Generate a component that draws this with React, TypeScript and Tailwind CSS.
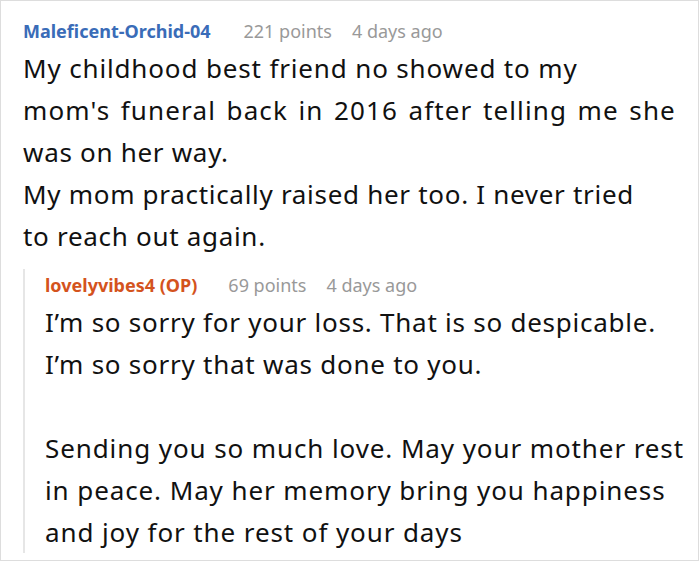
export default function App() {
  const font = { fontFamily: '"Noto Sans", "Open Sans", sans-serif' };
  return (
    <div style={font} className="w-[699px] h-[561px] border border-[#dddddd] bg-white overflow-hidden">
      <div className="pl-[22px] pt-[14px]">
        <div className="flex items-baseline text-[18px] leading-[32px] whitespace-nowrap">
          <span className="font-bold text-[#3a6cb8]">Maleficent-Orchid-04</span>
          <span className="ml-[33px] text-[#999999]">221 points</span>
          <span className="ml-[20px] text-[#999999]">4 days ago</span>
        </div>
        <div className="text-[26px] tracking-[0.7px] leading-[42px] text-[#111111] whitespace-nowrap">
          <p>
            <span className="tracking-[0.85px]">My childhood best friend no showed to my</span>
            <br />
            <span className="tracking-[1.15px] [word-spacing:2.5px]">mom's funeral back in 2016 after telling me she</span>
            <br />
            was on her way.
          </p>
          <p>
            My mom practically raised her too. I never tried
            <br />
            to reach out again.
          </p>
        </div>
        <div className="mt-[12px] border-l-2 border-[#e6e6e6] pl-[20px]">
          <div className="flex items-baseline text-[18px] leading-[32px] whitespace-nowrap">
            <span className="font-bold text-[#d4531d]">lovelyvibes4 (OP)</span>
            <span className="ml-[31px] text-[#999999]">69 points</span>
            <span className="ml-[20px] text-[#999999]">4 days ago</span>
          </div>
          <div className="text-[26px] leading-[42px] text-[#111111] whitespace-nowrap">
            <p className="tracking-[0.75px]">
              I’m so sorry for your loss. That is so despicable.
              <br />
              I’m so sorry that was done to you.
            </p>
            <p className="mt-[42px] tracking-[0.9px]">
              Sending you so much love. May your mother rest
              <br />
              in peace. May her memory bring you happiness
              <br />
              and joy for the rest of your days
            </p>
          </div>
        </div>
      </div>
    </div>
  );
}
